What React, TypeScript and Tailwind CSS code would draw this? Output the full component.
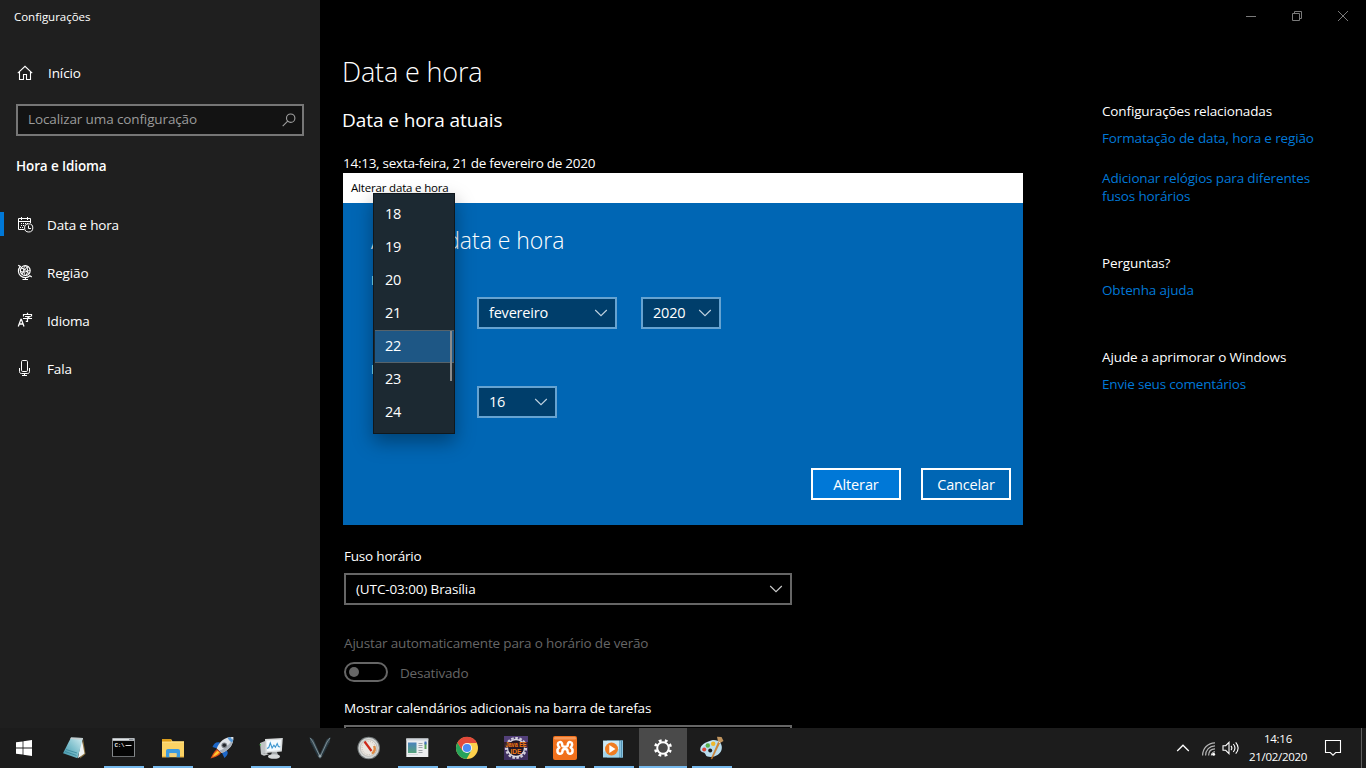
import type { ReactNode } from "react";

function Chevron({ className = "" }: { className?: string }) {
  return (
    <svg width="14" height="8" viewBox="0 0 14 8" fill="none" stroke="currentColor" strokeWidth="1.1" className={className}>
      <path d="M1.2 1 7 6.7 12.8 1" />
    </svg>
  );
}

function HomeIcon() {
  return (
    <svg width="16" height="16" viewBox="0 0 16 16" fill="none" stroke="currentColor" strokeWidth="1.1">
      <path d="M.8 8.2 8 1.3l7.2 6.9" />
      <path d="M2.5 6.8v7.7h4V9.5h3v5h4V6.8" />
    </svg>
  );
}

function DateTimeIcon() {
  return (
    <svg width="17" height="17" viewBox="0 0 17 17" fill="none" stroke="currentColor">
      <path d="M7 13.5H1.5v-11h12V7M1.5 5.5h12M4.5 1v3M10.5 1v3" />
      <path d="M4 7.5h1M6 7.5h1M8 7.5h1M10 7.5h1M4 9.5h1M6 9.5h1M3 11.5h1M5 11.5h1" />
      <circle cx="11.7" cy="11.9" r="4.1" />
      <path d="M11.5 9.5v3h2.5" />
    </svg>
  );
}

function RegionIcon() {
  return (
    <svg width="17" height="17" viewBox="0 0 17 17" fill="none" stroke="currentColor">
      <circle cx="8.3" cy="6.6" r="4.9" strokeWidth="1.2" />
      <path d="M4.2 4.2c3 .3 6 2.7 8 5.8M5 10c1.2-3 3.8-6 6.5-7.4M8.3 1.8c-2.2 2-2.3 7 .2 9.6M8.5 1.8c2.6 2.3 2.8 6.5.5 9.5M3.6 7.5c3 .9 6.5.5 9.3-1.5" />
      <path d="M1.2 1.2 3.3 2.5C.6 5.5 1 9.5 3.6 11.8c2.6 2.4 6.8 2.3 9.3 0l1.9 1.2" strokeWidth="1.2" />
      <path d="M8.5 13.5v2M5.5 15.5H11" />
    </svg>
  );
}

function LanguageIcon() {
  return (
    <svg width="17" height="17" viewBox="0 0 17 17" fill="none" stroke="currentColor">
      <path d="M1.3 14.5 3.9 7.3h.5L7 14.5M2.3 12h3.8" strokeWidth="1.3" />
      <path d="M10.5.8v1.7M6.5 4.5v-2h8v2M8 4.500h4.800L10.500 6v3.300H8.800M6 6.500h9" strokeWidth="1.2" />
    </svg>
  );
}

function MicIcon() {
  return (
    <svg width="17" height="17" viewBox="0 0 17 17" fill="none" stroke="currentColor">
      <rect x="4.5" y=".5" width="6" height="11" rx="1.2" />
      <path d="M2.5 8v3.5c0 1.400.7 2 2 2h6c1.300 0 2-.6 2-2V8M7.500 13.500v2M5 15.500h5" />
    </svg>
  );
}

function StartIcon() {
  return (
    <svg width="16" height="16" viewBox="0 0 16 16" fill="#fff">
      <path d="M0 2.300 6.600 1.400v6.200H0zM7.400 1.300 16 0v7.600H7.400zM0 8.400h6.600v6.200L0 13.700zM7.400 8.400H16V16l-8.600-1.300z" />
    </svg>
  );
}

function Icon24({ children }: { children: ReactNode }) {
  return (
    <svg width="24" height="24" viewBox="0 0 24 24">
      {children}
    </svg>
  );
}

const notepad = (
  <Icon24>
    <defs>
      <linearGradient id="np" x1="1" y1="0" x2="0" y2="1">
        <stop offset="0" stopColor="#d6eef2" />
        <stop offset=".5" stopColor="#7fc0cd" />
        <stop offset="1" stopColor="#3a8fa5" />
      </linearGradient>
    </defs>
    <path d="M20 2.500 22.500 18 17 22.500z" fill="#8d7440" />
    <path d="M18.500 2 21.500 17.500 15 22.300z" fill="#f0f3f3" />
    <path d="M8 1.500 20 2 14.500 22.300 0 17.300z" fill="url(#np)" />
    <path d="M8 1.500 20 2l-.5 1.700L7.300 3z" fill="#c4cdcf" />
    <path d="M3 13.500 14 17M2 15.500l11.500 4" stroke="#2f7f95" strokeWidth=".7" />
  </Icon24>
);

const cmd = (
  <Icon24>
    <rect x="0" y="2" width="23" height="19" rx=".8" fill="#85898c" />
    <rect x=".8" y="2.5" width="21.4" height="2" fill="#dfe3e6" />
    <rect x="17" y="3" width="4.5" height="1.2" fill="#8a9096" />
    <rect x="1" y="5" width="21" height="15.2" fill="#050505" />
    <text x="2.5" y="10.8" fontSize="6" fontWeight="700" fontFamily="Liberation Mono, monospace" fill="#e8e8e8" textLength="10">C:\</text>
    <path d="M13.5 9.5h6" stroke="#ddd" />
  </Icon24>
);

const explorer = (
  <Icon24>
    <path d="M1 3.200h9l1.500 2H23v16H1z" fill="#fcd364" />
    <path d="M1 3.200h9.300v2.500H1z" fill="#e09b12" />
    <path d="M1 5.700h22v1H1z" fill="#ffe08a" />
    <path d="M5 21.200v-6c0-1.500.8-2.200 2-2.200h10c1.200 0 2 .7 2 2.200v6h-3.500v-4h-7v4z" fill="#3b9ae0" />
    <path d="M8.500 17.200h7v3h-7z" fill="#f0d080" />
    <path d="M1 20.200h4v1H1zM19 20.200h4v1h-4z" fill="#e6ae3c" />
  </Icon24>
);

const rocket = (
  <Icon24>
    <path d="M10 6.500C6 5.500 4 7.500 2.500 11l5 1.500zM16.500 14.500c2.500 2 1 5-2 7.500L12 17z" fill="#1d67c8" />
    <path d="M23.300 1C15.500.5 9.500 5 6.700 12.500L11.500 17C19 14.500 23.800 8.500 23.300 1z" fill="#dfe3e8" />
    <path d="M23.300 1c.5 7.500-4.300 13.500-11.800 16l-2.300-2.200C16 12 21.500 7 23.300 1z" fill="#a9b1bb" />
    <path d="M17.500 1.800c1 2 2.700 3.800 4.700 4.800l.9-2.600c-1-.7-2-1.700-2.600-2.900z" fill="#5599d9" />
    <circle cx="14.3" cy="9.3" r="2.9" fill="#80858c" />
    <circle cx="14.3" cy="9.3" r="1.8" fill="#24282e" />
    <path d="M7 13 11 16.800C9.500 19.500 5 21.500.5 22.500 2 20 3.500 15.500 7 13z" fill="#e2501c" />
    <path d="M7.500 14.800 9.500 16.600C7.500 18.800 5 20 2.500 21 4 18.500 5.500 16 7.500 14.800z" fill="#ffc72e" />
  </Icon24>
);

const monitor = (
  <Icon24>
    <path d="M1 7l5-2 2 12-6 1.500z" fill="#bfc3c5" />
    <path d="M1.300 8v1.500" stroke="#4ac54a" strokeWidth="1.2" />
    <path d="M6 3 23.800 2 22.800 15.500 6.500 17z" fill="#d9dcdd" />
    <path d="M7.500 4.500 22 3.700l-.9 10.600L8 15.300z" fill="#f4fafe" />
    <path d="M8 12.500l1.800-1 1.500-4.500 1.800 5 1.800-2.800 1.500 2 1.800-3.700 1.200 3 1.800.6" fill="none" stroke="#3b95cf" strokeWidth="1.1" />
    <path d="M13 16h5l1 3h-7z" fill="#a5a9ab" />
    <ellipse cx="15" cy="20.500" rx="6" ry="2.3" fill="#d5d8d9" />
    <path d="M2 18.500l5-1.500 3 1.300-5 1.500z" fill="#c9cccd" />
  </Icon24>
);

const vee = (
  <Icon24>
    <path d="M1.500 1 5.500 3.500 12 18 18.700 3.500 22.500 1l-1 5.500-7 13.500-2.500 3-2.500-3-7-13.500z" fill="#33454e" />
    <path d="M2.300 2 5 6l6.700 14M22 2l-3 4-6.300 14" stroke="#9caab0" strokeWidth=".7" fill="none" />
    <path d="M3 7 10.300 20h3.400L21 7" stroke="#16242b" strokeWidth=".6" fill="none" />
    <circle cx="12" cy="20" r="1.5" fill="#98a5aa" />
  </Icon24>
);

const gauge = (
  <Icon24>
    <circle cx="11.7" cy="12" r="11.3" fill="#747a7b" />
    <circle cx="11.7" cy="12" r="10.3" fill="#d2d5d4" />
    <circle cx="11.7" cy="12" r="8.3" fill="#ebe7e1" stroke="#aaa7a3" strokeWidth=".6" />
    <circle cx="11.7" cy="12" r="6.6" fill="none" stroke="#c2b9af" strokeDasharray="1 1.3" />
    <path d="M15 17.500c2.800-1.500 3.500-5 2-7.500" stroke="#dd8a42" strokeWidth="2.4" fill="none" />
    <path d="M7.500 5.500 14.500 15" stroke="#cc2719" strokeWidth="2.2" />
  </Icon24>
);

const windowApp = (
  <Icon24>
    <defs>
      <linearGradient id="wa" x1="0" y1="0" x2="0" y2="1">
        <stop offset="0" stopColor="#4b83bd" />
        <stop offset="1" stopColor="#55a27c" />
      </linearGradient>
    </defs>
    <path d="M.3 2.500h22V21H.3z" fill="#eceef0" />
    <path d="M.3 2.500h22v2H.3z" fill="#cfd4da" />
    <path d="M2 6.500h8.500V17H2z" fill="url(#wa)" />
    <path d="M12.500 7.500h4M12.500 9.500h4M12.500 11.500h4M12.500 14.500h4M12.500 16.500h4" stroke="#9da4aa" />
    <path d="M18.500 6.500h2V13h-2z" fill="#5ba65c" />
    <path d="M18.500 5.500h2v3h-2z" fill="#456fc3" />
    <path d="M2 18.500h10" stroke="#d5d9dc" />
  </Icon24>
);

const chrome = (
  <Icon24>
    <circle cx="12" cy="12" r="11" fill="#fdd04b" />
    <path d="M2.470 6.500A11 11 0 0 0 11.500 23l5-8.700L12 12 7.500 14.500z" fill="#27a35a" />
    <path d="M2.470 6.500 7.200 14.600 12 12V7l10 0A11 11 0 0 0 2.470 6.500z" fill="#e24a3b" />
    <circle cx="12" cy="12" r="5.1" fill="#f4f4f4" />
    <circle cx="12" cy="12" r="4.1" fill="#4a8af4" />
  </Icon24>
);

const javaEE = (
  <Icon24>
    <rect width="24" height="24" fill="#53407a" />
    <rect y="12" width="24" height="12" fill="#3f2f60" />
    <circle cx="12" cy="12" r="10" fill="none" stroke="#d2cfdb" strokeWidth="2.2" strokeDasharray="2.6 1.59" />
    <circle cx="12" cy="12" r="8.5" fill="#1d1528" stroke="#dedbe6" strokeWidth="1.3" />
    <rect y="6" width="24" height="5.600" fill="#32191f" opacity=".85" />
    <text x="12" y="11" textAnchor="middle" fontSize="6.8" fontWeight="700" fontFamily="Liberation Sans, sans-serif" fill="#f27a14" textLength="21" lengthAdjust="spacingAndGlyphs">Java EE</text>
    <text x="12" y="17.5" textAnchor="middle" fontSize="7.2" fontWeight="700" fontFamily="Liberation Sans, sans-serif" fill="#f27a14" textLength="11" lengthAdjust="spacingAndGlyphs">IDE</text>
  </Icon24>
);

const xampp = (
  <Icon24>
    <rect width="24" height="24" rx="2" fill="#f0701c" />
    <rect x="1" y="1" width="22" height="2.5" rx="1.2" fill="#f79a5a" />
    <path
      d="M9.300 9.300C9.300 6.700 8 5.800 6.600 6.100 4.400 6.600 4.200 9.500 6.300 11.500 3.600 13.300 4 17.300 6.500 17.800c2 .3 3-1 3-2.800 0-1.400.9-2 2.500-2s2.500.6 2.500 2c0 1.800 1 3.100 3 2.800 2.500-.5 2.900-4.500.2-6.300 2.100-2 1.900-4.900-.3-5.400-1.400-.3-2.700.6-2.700 3.200 0 1-.9 1.500-2.700 1.500s-2.700-.5-2.700-1.500z"
      fill="none"
      stroke="#fff"
      strokeWidth="2.5"
      strokeLinejoin="round"
    />
  </Icon24>
);

const mediaPlayer = (
  <Icon24>
    <path d="M5 4.500h16v17H5z" fill="#4c94ba" />
    <path d="M18 4.500h3v17h-3z" fill="#8ac2dd" />
    <path d="M19.500 4.500v17" stroke="#3c7ea3" strokeWidth=".7" />
    <path d="M1 4.500h16.500v17H1z" fill="#a4d4e9" />
    <path d="M1.500 5h15.500v8c-5 1-10-.5-15.500 3z" fill="#cfeaf5" />
    <circle cx="9.5" cy="13" r="6.5" fill="#f07d22" />
    <path d="M7.300 9v8l6.200-4z" fill="#fff" />
  </Icon24>
);

const gear = (
  <Icon24>
    <circle cx="12" cy="12" r="7.7" fill="none" stroke="#fff" strokeWidth="2.6" strokeDasharray="2.900 3.148" strokeDashoffset="1.450" transform="rotate(22.500 12 12)" />
    <circle cx="12" cy="12" r="5.8" fill="none" stroke="#fff" strokeWidth="2" />
  </Icon24>
);

const paint = (
  <Icon24>
    <path d="M11 4.500C18 2.500 23.500 8 21.500 14c-1.500 5-8 8-14 6.500-2-.5-1.500-2.500-3-3.500C2 16 0 15.500.3 12.800.7 9 5.500 6 11 4.500z" fill="#b8dcee" />
    <path d="M11 5.500c-5 1.300-9.500 4-9.800 7 2-4 8-6.500 13-6.500z" fill="#e4f4fb" />
    <circle cx="4.2" cy="13.5" r="2" fill="#dd4638" />
    <circle cx="7.8" cy="9.5" r="2.2" fill="#58b04b" />
    <circle cx="13.2" cy="7.7" r="2.2" fill="#eeb72b" />
    <circle cx="10.2" cy="14.5" r="2" fill="#1c1c1c" />
    <path d="M20 6.500 12 23l-.9-.3L18.500 5.800z" fill="#d98b35" stroke="#b96d20" strokeWidth=".5" />
    <path d="M17 .8l4.500.2 2 4-3.500 2-2-1.500z" fill="#c0945e" />
    <path d="M18.500 5.800 20.300 6.800" stroke="#eee" />
  </Icon24>
);

const apps: { id: string; icon: ReactNode; state: "idle" | "open" | "active" }[] = [
  { id: "notepad", icon: notepad, state: "idle" },
  { id: "cmd", icon: cmd, state: "open" },
  { id: "explorer", icon: explorer, state: "open" },
  { id: "rocket", icon: rocket, state: "idle" },
  { id: "monitor", icon: monitor, state: "open" },
  { id: "vee", icon: vee, state: "idle" },
  { id: "gauge", icon: gauge, state: "idle" },
  { id: "window", icon: windowApp, state: "open" },
  { id: "chrome", icon: chrome, state: "open" },
  { id: "java", icon: javaEE, state: "open" },
  { id: "xampp", icon: xampp, state: "open" },
  { id: "media", icon: mediaPlayer, state: "open" },
  { id: "settings", icon: gear, state: "active" },
  { id: "paint", icon: paint, state: "open" },
];

const navItems = [
  { label: "Data e hora", icon: <DateTimeIcon />, active: true },
  { label: "Região", icon: <RegionIcon />, active: false },
  { label: "Idioma", icon: <LanguageIcon />, active: false },
  { label: "Fala", icon: <MicIcon />, active: false },
];

function Sidebar() {
  return (
    <aside className="flex w-80 shrink-0 flex-col bg-[#1f1f1f]">
      <div className="flex h-8 items-center pl-[14px] pt-px text-[11.5px] tracking-[-0.02px]">Configurações</div>
      <div className="mt-[17px] flex h-12 items-center pl-[17px]">
        <HomeIcon />
        <span className="ml-[15px] tracking-[-0.1px]">Início</span>
      </div>
      <div className="mx-4 mt-[7px] flex h-8 items-center justify-between border-2 border-[#767676] bg-[#131313] pl-[10px] pr-[6px]">
        <span className="-mt-[2px] tracking-[-0.12px] text-[#9b9b9b]">Localizar uma configuração</span>
        <svg width="14" height="14" viewBox="0 0 14 14" fill="none" stroke="#a0a0a0" strokeWidth="1.1">
          <circle cx="8.7" cy="5.2" r="4.2" />
          <path d="M5.700 8.200.7 13.200" />
        </svg>
      </div>
      <div className="mt-5 flex h-5 items-center pl-4 font-semibold tracking-[-0.12px]">Hora e Idioma</div>
      <nav className="mt-[25px] flex flex-col">
        {navItems.map((n) => (
          <div key={n.label} className="flex h-12 items-center">
            <span className={n.active ? "-mt-[2px] h-6 w-1 bg-[#0078d7]" : "h-6 w-1"} />
            <span className="-mt-px ml-[13px]">{n.icon}</span>
            <span className="ml-[13px] tracking-[-0.15px]">{n.label}</span>
          </div>
        ))}
      </nav>
    </aside>
  );
}

function DialogSelect({ value, wide = false }: { value: string; wide?: boolean }) {
  return (
    <div
      className={
        "flex h-8 items-center justify-between border-2 border-[#66a3d1] bg-[#003e6b] pl-[10px] pr-[7px] text-[14.5px] tracking-[-0.2px] " +
        (wide ? "w-[140px]" : "w-20")
      }
    >
      <span>{value}</span>
      <Chevron className="text-[#c0d2e0]" />
    </div>
  );
}

const days = [18, 19, 20, 21, 22, 23, 24];

function DayList() {
  return (
    <div className="absolute left-[30px] top-5 h-[241px] w-[82px] border border-[#10181d] bg-[#1c2932] pt-1 text-[14.5px] tracking-[-0.25px] shadow-[0_8px_18px_rgba(0,0,0,0.35)]">
      {days.map((d) => (
        <div
          key={d}
          className={
            d === 22
              ? "ml-px flex h-[33px] items-center border-y border-[#56636b] bg-[#1e5785] pb-[2px] pl-[10px]"
              : "flex h-[33px] items-center pb-[2px] pl-[11px]"
          }
        >
          {d}
        </div>
      ))}
      <span className="absolute right-[2px] top-[137px] h-[50px] w-[2px] bg-[#8b8b8b]" />
    </div>
  );
}

function ChangeDialog() {
  return (
    <div className="absolute left-[23px] top-[173px] flex h-[352px] w-[680px] flex-col bg-[#0066b4]">
      <div className="flex h-[30px] items-center bg-white pl-2 text-[11.5px] tracking-[-0.18px] text-black">
        Alterar data e hora
      </div>
      <div className="flex flex-1 flex-col pl-7">
        <h2 className="mt-[21px] h-8 text-[23px] font-light leading-8 tracking-[-0.03px]">Alterar data e hora</h2>
        <span className="mt-[14px] h-5 leading-5">Data</span>
        <div className="mt-[7px] flex gap-6 pl-[2px]">
          <span className="w-20" />
          <DialogSelect value="fevereiro" wide />
          <DialogSelect value="2020" />
        </div>
        <span className="mt-[30px] h-5 leading-5">Hora</span>
        <div className="mt-[7px] flex gap-6 pl-[2px]">
          <span className="w-20" />
          <DialogSelect value="16" />
        </div>
        <div className="mt-[50px] flex justify-end gap-5 pr-3 text-[14.5px]">
          <button className="h-8 w-[90px] border-2 border-white bg-[#0078d7] pt-[2px] tracking-[-0.1px]">Alterar</button>
          <button className="h-8 w-[90px] border-2 border-white pt-[2px] tracking-[-0.15px]">Cancelar</button>
        </div>
      </div>
      <DayList />
    </div>
  );
}

function Related() {
  return (
    <section className="ml-[310px] mt-[54px] flex w-56 flex-col tracking-[-0.14px]">
      <div className="leading-[18px]">Configurações relacionadas</div>
      <a className="mt-[9px] leading-[18px] text-[#0078d7]">Formatação de data, hora e região</a>
      <a className="mt-[22px] leading-[18px] text-[#0078d7]">
        Adicionar relógios para diferentes
        <br />
        fusos horários
      </a>
      <div className="mt-[49px] leading-[18px]">Perguntas?</div>
      <a className="mt-[9px] leading-[18px] text-[#0078d7]">Obtenha ajuda</a>
      <div className="mt-[49px] leading-[18px] tracking-[-0.1px]">Ajude a aprimorar o Windows</div>
      <a className="mt-[9px] leading-[18px] tracking-[-0.18px] text-[#0078d7]">Envie seus comentários</a>
    </section>
  );
}

function Main() {
  return (
    <main className="relative flex flex-1 bg-black">
      <div className="flex w-[472px] shrink-0 flex-col overflow-hidden pl-[22px]">
        <h1 className="mt-[52px] h-10 text-[27px] font-light leading-10 tracking-[-0.15px]">Data e hora</h1>
        <h2 className="mt-[14px] h-7 text-[19px] leading-7 tracking-[-0.08px]">Data e hora atuais</h2>
        <p className="mt-[19px] h-5 pl-px leading-5 tracking-[-0.26px]">14:13, sexta-feira, 21 de fevereiro de 2020</p>
        <div className="mt-[373px] h-5 pl-[2px] leading-5 tracking-[-0.2px]">Fuso horário</div>
        <div className="ml-[2px] mt-[7px] flex h-8 w-[448px] shrink-0 items-center justify-between border-2 border-[#666] pl-[10px] pr-[7px]">
          <span className="tracking-[-0.12px]">(UTC-03:00) Brasília</span>
          <Chevron className="text-[#ccc]" />
        </div>
        <div className="mt-[28px] h-5 pl-[2px] leading-5 tracking-[-0.16px] text-[#666]">
          Ajustar automaticamente para o horário de verão
        </div>
        <div className="mt-[9px] flex h-5 items-center pl-[2px] text-[#666]">
          <span className="flex h-5 w-11 items-center rounded-full border-2 border-[#666] pl-[3px]">
            <span className="size-[10px] rounded-full bg-[#666]" />
          </span>
          <span className="ml-3 mt-[2px] tracking-[-0.18px]">Desativado</span>
        </div>
        <div className="mt-4 h-5 pl-[2px] leading-5 tracking-[-0.18px]">
          Mostrar calendários adicionais na barra de tarefas
        </div>
        <div className="ml-[2px] mt-[7px] h-8 w-[448px] shrink-0 border-2 border-[#666]" />
      </div>
      <div className="flex flex-1 flex-col">
        <div className="flex h-8 items-center justify-end gap-[34px] pr-[17px] text-[#7a7a7a]">
          <svg width="12" height="12" viewBox="0 0 12 12" fill="none" stroke="currentColor">
            <path d="M1 6.500h10" />
          </svg>
          <svg width="12" height="12" viewBox="0 0 12 12" fill="none" stroke="currentColor">
            <path d="M1.500 3.500h7v7h-7zM3.500 3.500v-2h7v7h-2" />
          </svg>
          <svg width="12" height="12" viewBox="0 0 12 12" fill="none" stroke="currentColor">
            <path d="M1 1l10 10M11 1 1 11" />
          </svg>
        </div>
        <div className="h-4" />
        <Related />
      </div>
      <ChangeDialog />
    </main>
  );
}

function Taskbar() {
  return (
    <footer className="flex h-10 shrink-0 bg-[#1c1c1c]">
      <div className="mr-[3px] flex w-12 items-center justify-center">
        <StartIcon />
      </div>
      <div className="flex flex-1 gap-px">
        {apps.map((a) => (
          <div
            key={a.id}
            className={"flex w-12 flex-col items-center pt-2 " + (a.state === "active" ? "bg-[#4a4a4a]" : "")}
          >
            {a.icon}
            <span
              className={
                "mt-[6px] h-[2px] " +
                (a.state === "active" ? "w-12 bg-[#76b9ed]" : a.state === "open" ? "w-10 bg-[#76b9ed]" : "w-10")
              }
            />
          </div>
        ))}
      </div>
      <div className="flex items-center">
        <svg width="14" height="8" viewBox="0 0 14 8" fill="none" stroke="currentColor" strokeWidth="1.3">
          <path d="M1.200 7 7 1.200 12.800 7" />
        </svg>
        <svg width="16" height="16" viewBox="0 0 16 16" fill="none" className="ml-[11px] mt-[2px]">
          <g stroke="#b5b5b5" strokeWidth="1.2">
            <path d="M1.600 14.500C1.600 7.400 6.900 1.800 14 1.800" />
            <path d="M4.600 14.500C4.600 9 8.500 4.800 14 4.800" />
            <path d="M7.600 14.500C7.600 10.500 10 7.800 14 7.800" />
          </g>
          <path d="M10.300 14.500c0-2.200 1.500-3.700 3.700-3.700" stroke="#ddd" />
          <circle cx="12.6" cy="13.2" r="1.5" fill="#fff" />
        </svg>
        <svg width="18" height="16" viewBox="0 0 18 16" fill="none" stroke="currentColor" strokeWidth="1.1" className="ml-[5px]">
          <path d="M1 5.700h2.700L7 2.300v11.400l-3.300-3.400H1z" />
          <path d="M9 5.800c1 1.300 1 3.100 0 4.400M11.300 4c2 2.400 2 5.600 0 8M13.700 2.300c3 3.500 3 7.900 0 11.400" />
        </svg>
        <div className="ml-2 flex w-[60px] flex-col items-center text-[11.5px] leading-[18px] tracking-[-0.28px]">
          <span>14:16</span>
          <span>21/02/2020</span>
        </div>
        <svg width="18" height="18" viewBox="0 0 18 18" fill="none" stroke="currentColor" strokeWidth="1.1" className="ml-4">
          <path d="M1.500 1.500h15v12h-4.800L9 16.200l-2.700-2.700H1.500z" />
        </svg>
        <span className="ml-[19px] mr-1 h-10 w-px bg-[#5f5f5f]" />
      </div>
    </footer>
  );
}

export default function App() {
  return (
    <div className="flex h-[768px] w-[1366px] flex-col overflow-hidden bg-black font-['Open_Sans','Noto_Sans',sans-serif] text-[13.5px] text-white">
      <div className="flex h-[728px] overflow-hidden">
        <Sidebar />
        <Main />
      </div>
      <Taskbar />
    </div>
  );
}
